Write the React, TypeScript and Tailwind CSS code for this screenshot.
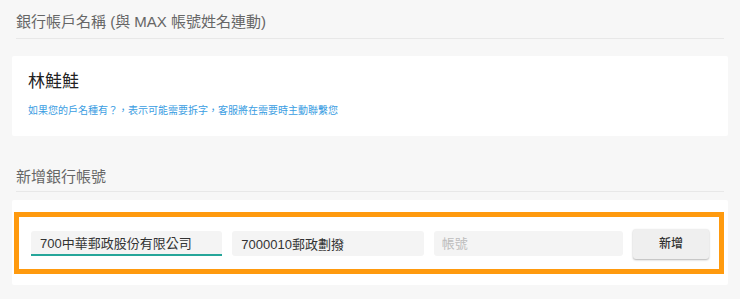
import { useState } from "react";

export default function App() {
  const [bank, setBank] = useState("700中華郵政股份有限公司");
  const [branch, setBranch] = useState("7000010郵政劃撥");
  const [account, setAccount] = useState("");

  return (
    <div className="w-[740px] h-[299px] overflow-hidden bg-[#f7f7f7] font-['Liberation_Sans','Noto_Sans_CJK_TC',sans-serif]">
      {/* Account name section */}
      <div className="mx-4 pt-3 pb-[6px] border-b border-[#e8e8e8]">
        <h2 className="text-[15px] leading-5 text-[#666]">
          銀行帳戶名稱 (與 MAX 帳號姓名連動)
        </h2>
      </div>

      <div className="mx-3 mt-[17px] bg-white rounded-[2px] px-4 pt-[14px] pb-[18px]">
        <div className="text-[17px] leading-6 text-[#222]">林鮭鮭</div>
        <p className="mt-[10px] text-[10px] leading-[14px] text-[#3a9de2]">
          如果您的戶名種有？，表示可能需要拆字，客服將在需要時主動聯繫您
        </p>
      </div>

      {/* Add bank account */}
      <div className="mx-4 mt-[31px] pb-1 border-b border-[#e8e8e8]">
        <h2 className="text-[15px] leading-5 text-[#666]">新增銀行帳號</h2>
      </div>

      <div className="mx-3 mt-2 bg-white rounded-[2px] pt-3 pb-[11px] pl-[2px] pr-1">
        <div className="h-[62px] border-[5px] border-[#ff9a0e] flex items-center gap-[10px] pl-3 pr-[10px] pt-[1px]">
          <input
            value={bank}
            onChange={(e) => setBank(e.target.value)}
            className="flex-1 min-w-0 h-[25px] px-[9px] bg-[#f4f4f4] rounded-t-[3px] border-b-2 border-[#26a69a] text-[13px] text-[#333] outline-none"
          />
          <input
            value={branch}
            onChange={(e) => setBranch(e.target.value)}
            className="flex-1 min-w-0 h-[25px] px-[9px] bg-[#f4f4f4] rounded-[3px] text-[13px] text-[#333] outline-none"
          />
          <input
            value={account}
            onChange={(e) => setAccount(e.target.value)}
            placeholder="帳號"
            className="flex-1 min-w-0 h-[25px] px-[8px] bg-[#f4f4f4] rounded-[3px] text-[13px] text-[#333] placeholder:text-[#bdbdbd] outline-none"
          />
          <button className="w-[76px] h-[30px] shrink-0 rounded-[3px] bg-[#efefef] text-[12px] font-medium text-[#333] shadow-[0_1px_2px_rgba(0,0,0,0.3)]">
            新增
          </button>
        </div>
      </div>
    </div>
  );
}
